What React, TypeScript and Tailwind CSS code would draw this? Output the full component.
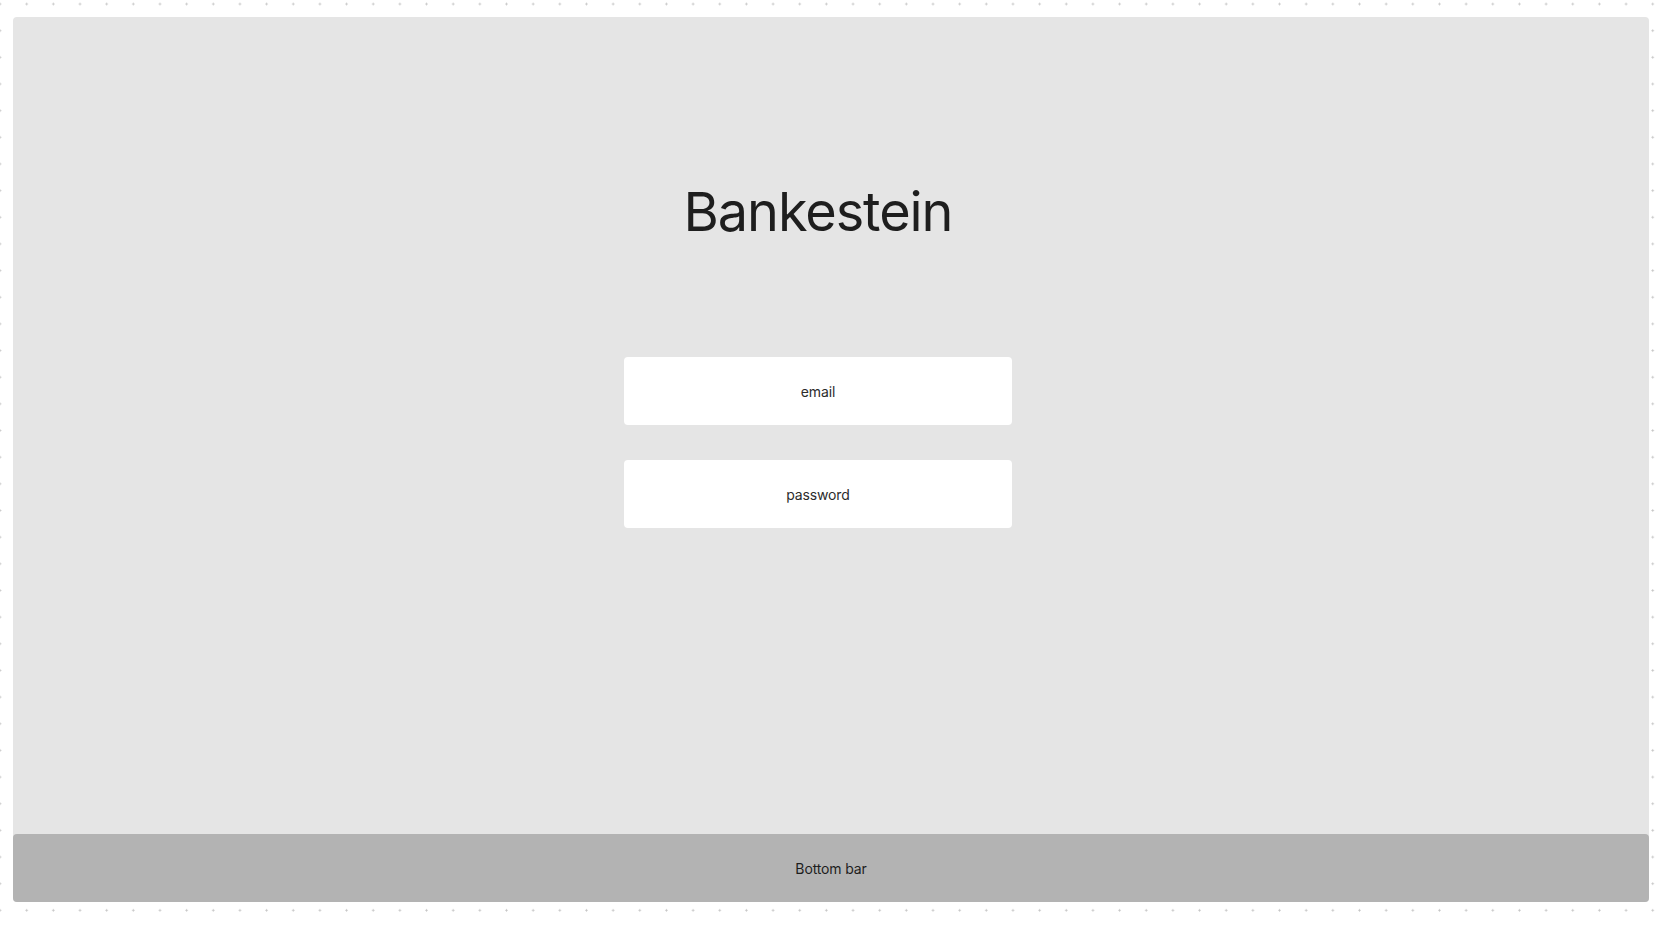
import React from "react";

export default function App() {
  return (
    <div
      className="h-[930px] w-[1660px] bg-white pt-[17px] pl-[13px] pr-[11px] pb-[28px]"
      style={{
        fontFamily: "Inter, 'Noto Sans', sans-serif",
      }}
    >
      <div
        className="absolute inset-0 pointer-events-none"
        style={{
          width: 1660,
          height: 930,
          backgroundImage: "radial-gradient(circle, #c4c4c4 0.9px, transparent 1.2px)",
          backgroundSize: "26.67px 26.67px",
          backgroundPosition: "-13.3px -9.3px",
        }}
      />
      <div className="relative flex h-full flex-col rounded-[4px] bg-[#e5e5e5]">
        <div className="flex flex-1 flex-col items-center pr-[26px]">
          <h1 className="mt-[168px] text-[54px] leading-[54px] font-normal tracking-[-0.02em] text-[#1e1e1e]">
            Bankestein
          </h1>
          <div className="mt-[118px] flex flex-col gap-[35px]">
            <div className="flex h-[68px] w-[388px] items-center justify-center rounded-[4px] bg-white text-[14px] tracking-[-0.01em] text-[#2c2c2c]">
              email
            </div>
            <div className="flex h-[68px] w-[388px] items-center justify-center rounded-[4px] bg-white text-[14px] tracking-[-0.01em] text-[#2c2c2c]">
              password
            </div>
          </div>
        </div>
        <div className="flex h-[68px] items-center justify-center rounded-[4px] bg-[#b3b3b3] text-[14px] tracking-[-0.01em] text-[#1e1e1e]">
          Bottom bar
        </div>
      </div>
    </div>
  );
}
